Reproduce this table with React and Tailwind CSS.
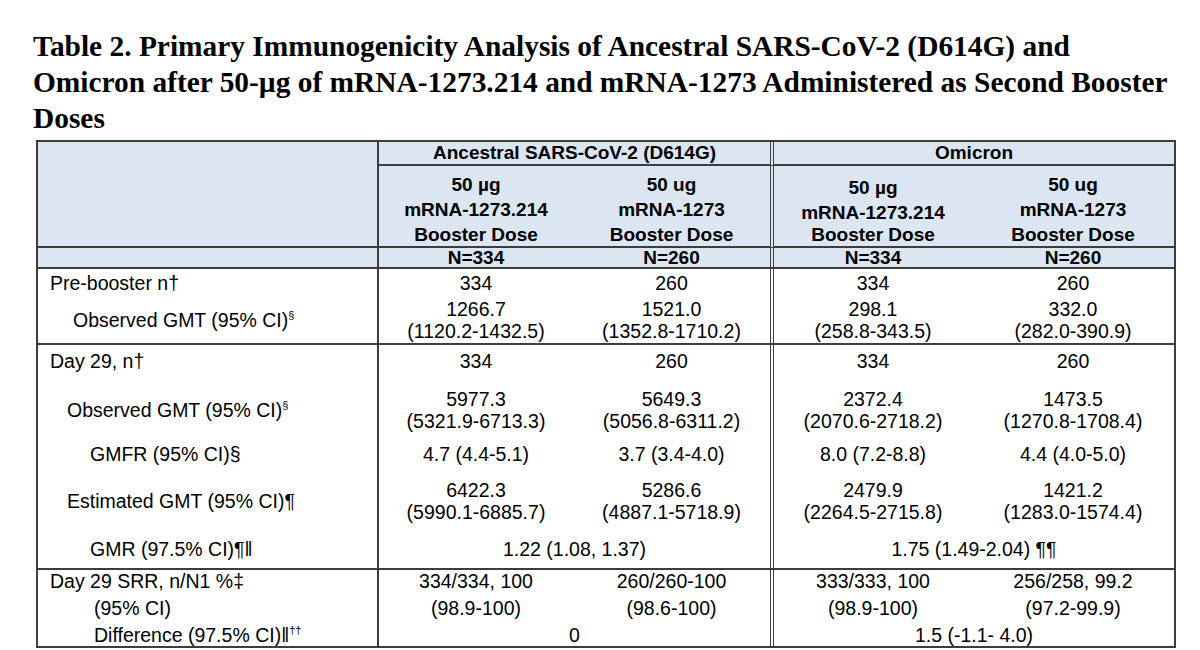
import React from "react";

const grid = "grid grid-cols-[339px_196px_197px_202px_202px]";
const line = "border-[#3d3d3d]";
const dbl = "border-l-[4px] [border-left-style:double]";

const subHeads = [
  { lines: ["50 µg", "mRNA-1273.214", "Booster Dose"], cls: `border-l-2 pt-[6px]` },
  { lines: ["50 ug", "mRNA-1273", "Booster Dose"], cls: "pt-[6px]" },
  { lines: ["50 µg", "mRNA-1273.214", "Booster Dose"], cls: `${dbl} pt-[9px]`, tight: true },
  { lines: ["50 ug", "mRNA-1273", "Booster Dose"], cls: "pt-[6px]" },
];

const sections = [
  [
    { label: "Pre-booster n†", pad: "pl-[12px]", h: "h-[28px]", values: ["334", "260", "334", "260"] },
    {
      label: <>Observed GMT (95% CI)<sup className="text-[11px] align-[8px]">§</sup></>,
      pad: "pl-[35px]",
      h: "h-[46px]",
      values: [
        ["1266.7", "(1120.2-1432.5)"],
        ["1521.0", "(1352.8-1710.2)"],
        ["298.1", "(258.8-343.5)"],
        ["332.0", "(282.0-390.9)"],
      ],
    },
  ],
  [
    { label: "Day 29, n†", pad: "pl-[12px]", h: "h-[32px]", values: ["334", "260", "334", "260"] },
    {
      label: <>Observed GMT (95% CI)<sup className="text-[11px] align-[8px]">§</sup></>,
      pad: "pl-[29px]",
      h: "h-[66px]",
      values: [
        ["5977.3", "(5321.9-6713.3)"],
        ["5649.3", "(5056.8-6311.2)"],
        ["2372.4", "(2070.6-2718.2)"],
        ["1473.5", "(1270.8-1708.4)"],
      ],
    },
    {
      label: "GMFR (95% CI)§",
      pad: "pl-[52px]",
      h: "h-[22px]",
      values: ["4.7 (4.4-5.1)", "3.7 (3.4-4.0)", "8.0 (7.2-8.8)", "4.4 (4.0-5.0)"],
    },
    {
      label: "Estimated GMT (95% CI)¶",
      pad: "pl-[29px]",
      h: "h-[72px]",
      values: [
        ["6422.3", "(5990.1-6885.7)"],
        ["5286.6", "(4887.1-5718.9)"],
        ["2479.9", "(2264.5-2715.8)"],
        ["1421.2", "(1283.0-1574.4)"],
      ],
    },
    {
      label: "GMR (97.5% CI)¶‖",
      pad: "pl-[52px] pb-[8px]",
      h: "h-[31px]",
      cell: "pb-[8px]",
      span: ["1.22 (1.08, 1.37)", "1.75 (1.49-2.04) ¶¶"],
    },
  ],
  [
    {
      label: "Day 29 SRR, n/N1 %‡",
      pad: "pl-[12px]",
      h: "h-[21px]",
      values: ["334/334, 100", "260/260-100", "333/333, 100", "256/258, 99.2"],
    },
    {
      label: "(95% CI)",
      pad: "pl-[56px]",
      h: "h-[33px]",
      values: ["(98.9-100)", "(98.6-100)", "(98.9-100)", "(97.2-99.9)"],
    },
    {
      label: <>Difference (97.5% CI)‖<sup className="text-[11px] align-[8px]">††</sup></>,
      pad: "pl-[56px]",
      h: "h-[22px]",
      span: ["0", "1.5 (-1.1- 4.0)"],
    },
  ],
];

const colBorder = [`border-l-2 ${line}`, "", `${dbl} ${line}`, ""];

const Value = ({ v }) =>
  Array.isArray(v) ? (
    <div className="flex flex-col items-center">
      {v.map((t) => (
        <span key={t}>{t}</span>
      ))}
    </div>
  ) : (
    <span>{v}</span>
  );

const Row = ({ row }) => (
  <div className={`${grid} ${row.h}`}>
    <div className={`flex items-center whitespace-nowrap ${row.pad}`}>{row.label}</div>
    {row.span ? (
      <>
        <div className={`col-span-2 flex items-center justify-center border-l-2 ${line} ${row.cell || ""}`}>
          {row.span[0]}
        </div>
        <div className={`col-span-2 flex items-center justify-center ${dbl} ${line} ${row.cell || ""}`}>
          {row.span[1]}
        </div>
      </>
    ) : (
      row.values.map((v, i) => (
        <div key={i} className={`flex items-center justify-center ${colBorder[i]}`}>
          <Value v={v} />
        </div>
      ))
    )}
  </div>
);

export default function App() {
  return (
    <div className="min-h-[650px] w-[1200px] bg-white text-black">
      <h1 className="pl-[33px] pt-[28px] font-['Liberation_Serif',serif] text-[29.4px] font-bold leading-[36px] text-black">
        Table 2. Primary Immunogenicity Analysis of Ancestral SARS-CoV-2 (D614G) and
        <br />
        Omicron after 50-µg of mRNA-1273.214 and mRNA-1273 Administered as Second Booster
        <br />
        Doses
      </h1>

      <div className={`ml-[36px] mt-[4px] w-[1140px] border-2 ${line} font-['Liberation_Sans',Arial,sans-serif] text-[19.5px] leading-[22px]`}>
        {/* header */}
        <div className={`${grid} grid-rows-[24px_82px_19px] border-b-2 ${line} bg-[#dce6f2] text-[19px] font-bold`}>
          <div className={`row-span-2 border-b-2 ${line}`} />
          <div className={`col-span-2 flex items-center justify-center border-b-2 border-l-2 ${line}`}>
            Ancestral SARS-CoV-2 (D614G)
          </div>
          <div className={`col-span-2 flex items-center justify-center border-b-2 ${dbl} ${line}`}>
            Omicron
          </div>
          {subHeads.map((s, i) => (
            <div key={i} className={`flex flex-col items-center border-b-2 ${line} ${s.cls}`}>
              <span className="leading-[25px]">{s.lines[0]}</span>
              <span className="leading-[25px]">{s.lines[1]}</span>
              <span className={s.tight ? "leading-[20px]" : "leading-[25px]"}>{s.lines[2]}</span>
            </div>
          ))}
          <div />
          {["N=334", "N=260", "N=334", "N=260"].map((n, i) => (
            <div key={i} className={`flex items-center justify-center leading-[19px] ${colBorder[i]}`}>
              {n}
            </div>
          ))}
        </div>

        {sections.map((rows, si) => (
          <div key={si} className={si < sections.length - 1 ? `border-b-2 ${line}` : ""}>
            {rows.map((row, ri) => (
              <Row key={ri} row={row} />
            ))}
          </div>
        ))}
      </div>
    </div>
  );
}
